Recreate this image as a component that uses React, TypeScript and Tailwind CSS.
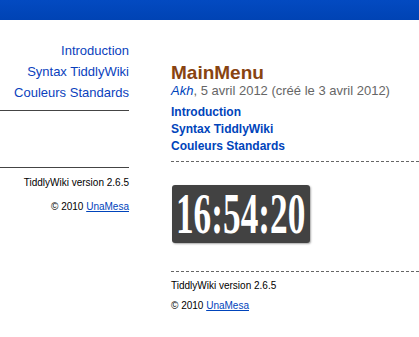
import React from 'react';

const sideLinks = ["Introduction", "Syntax TiddlyWiki", "Couleurs Standards"];

function Clock() {
    return (
        <div className="w-[138px] h-[58px] ml-[1px] mt-[23px] rounded-[3px] bg-[#424242] shadow-[1px_1px_2px_rgba(0,0,0,0.35)] flex items-center justify-center">
            <span
                className="inline-block -mx-[38px] whitespace-nowrap scale-x-[0.63] text-white font-bold text-[56px] leading-none"
                style={{ fontFamily: '"Liberation Serif", "Times New Roman", serif' }}
            >
                16:54:20
            </span>
        </div>
    );
}

export default function App() {
    return (
        <div className="w-[419px] h-[337px] bg-white overflow-hidden" style={{ fontFamily: '"Liberation Sans", Arial, sans-serif' }}>
            <div className="h-[20px] bg-gradient-to-b from-[#034ac1] to-[#0043b4]" />

            <div className="flex">
                {/* sidebar */}
                <div className="w-[129px] shrink-0 pt-[20px] text-right">
                    {sideLinks.map((l) => (
                        <div key={l} className="text-[13px] leading-[21px] text-[#0a3fbd]">{l}</div>
                    ))}
                    <div className="mt-[7px] h-[1px] bg-[#444]" />
                    <div className="mt-[56px] h-[1px] bg-[#444]" />
                    <div className="mt-[8px] text-[10px] leading-[14px] text-black">TiddlyWiki version 2.6.5</div>
                    <div className="mt-[10px] text-[10px] leading-[14px] text-black">
                        © 2010 <span className="text-[#0044bb] underline">UnaMesa</span>
                    </div>
                </div>

                {/* tiddler */}
                <div className="flex-1 ml-[42px] pt-[43px]">
                    <div className="text-[19px] leading-[20px] font-bold text-[#884411]">MainMenu</div>
                    <div className="text-[13px] leading-[16px] text-[#666]">
                        <span className="italic text-[#0044bb]">Akh</span>, 5 avril 2012 (créé le 3 avril 2012)
                    </div>
                    <div className="mt-[5px]">
                        {sideLinks.map((l) => (
                            <div key={l} className="text-[12px] leading-[17px] font-bold text-[#0044bb]">{l}</div>
                        ))}
                    </div>
                    <div className="mt-[6px] border-t border-dashed border-[#666]" />
                    <Clock />
                    <div className="mt-[28px] border-t border-dashed border-[#666]" />
                    <div className="mt-[7px] text-[10px] leading-[14px] text-black">TiddlyWiki version 2.6.5</div>
                    <div className="mt-[6px] text-[10px] leading-[14px] text-black">
                        © 2010 <span className="text-[#0044bb] underline">UnaMesa</span>
                    </div>
                </div>
            </div>
        </div>
    );
}
